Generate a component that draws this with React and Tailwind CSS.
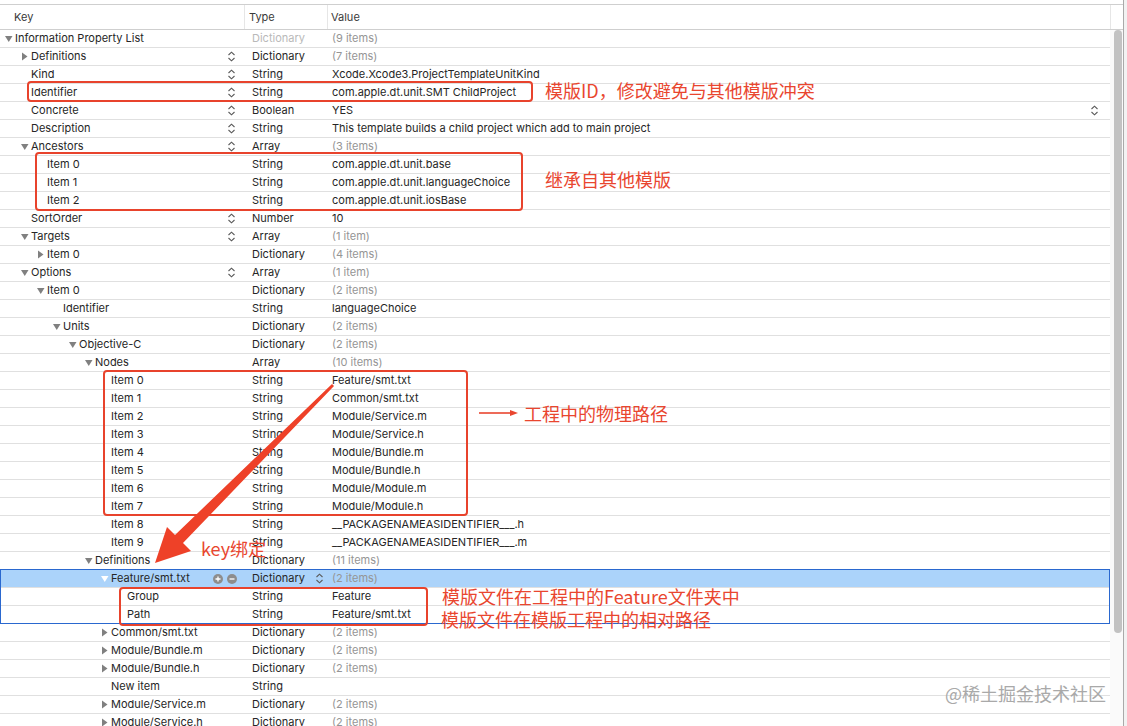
import React from "react";

const RED = "#e9462f";

const PAD = ["pl-[5px]", "pl-[21px]", "pl-[37px]", "pl-[53px]", "pl-[69px]", "pl-[85px]", "pl-[101px]", "pl-[117px]"];

const rows = [
  { l: 0, t: "open", k: "Information Property List", type: "Dictionary", tg: true, v: "(9 items)", vg: true },
  { l: 1, t: "closed", k: "Definitions", s: true, type: "Dictionary", v: "(7 items)", vg: true },
  { l: 1, k: "Kind", s: true, type: "String", v: "Xcode.Xcode3.ProjectTemplateUnitKind" },
  { l: 1, k: "Identifier", s: true, type: "String", v: "com.apple.dt.unit.SMT ChildProject" },
  { l: 1, k: "Concrete", s: true, type: "Boolean", v: "YES", vs: true },
  { l: 1, k: "Description", s: true, type: "String", v: "This template builds a child project which add to main project" },
  { l: 1, t: "open", k: "Ancestors", s: true, type: "Array", v: "(3 items)", vg: true },
  { l: 2, k: "Item 0", type: "String", v: "com.apple.dt.unit.base" },
  { l: 2, k: "Item 1", type: "String", v: "com.apple.dt.unit.languageChoice" },
  { l: 2, k: "Item 2", type: "String", v: "com.apple.dt.unit.iosBase" },
  { l: 1, k: "SortOrder", s: true, type: "Number", v: "10" },
  { l: 1, t: "open", k: "Targets", s: true, type: "Array", v: "(1 item)", vg: true },
  { l: 2, t: "closed", k: "Item 0", type: "Dictionary", v: "(4 items)", vg: true },
  { l: 1, t: "open", k: "Options", s: true, type: "Array", v: "(1 item)", vg: true },
  { l: 2, t: "open", k: "Item 0", type: "Dictionary", v: "(2 items)", vg: true },
  { l: 3, k: "Identifier", type: "String", v: "languageChoice" },
  { l: 3, t: "open", k: "Units", type: "Dictionary", v: "(2 items)", vg: true },
  { l: 4, t: "open", k: "Objective-C", type: "Dictionary", v: "(2 items)", vg: true },
  { l: 5, t: "open", k: "Nodes", type: "Array", v: "(10 items)", vg: true },
  { l: 6, k: "Item 0", type: "String", v: "Feature/smt.txt" },
  { l: 6, k: "Item 1", type: "String", v: "Common/smt.txt" },
  { l: 6, k: "Item 2", type: "String", v: "Module/Service.m" },
  { l: 6, k: "Item 3", type: "String", v: "Module/Service.h" },
  { l: 6, k: "Item 4", type: "String", v: "Module/Bundle.m" },
  { l: 6, k: "Item 5", type: "String", v: "Module/Bundle.h" },
  { l: 6, k: "Item 6", type: "String", v: "Module/Module.m" },
  { l: 6, k: "Item 7", type: "String", v: "Module/Module.h" },
  { l: 6, k: "Item 8", type: "String", v: "__PACKAGENAMEASIDENTIFIER___.h" },
  { l: 6, k: "Item 9", type: "String", v: "__PACKAGENAMEASIDENTIFIER___.m" },
  { l: 5, t: "open", k: "Definitions", type: "Dictionary", v: "(11 items)", vg: true },
  { l: 6, t: "open", k: "Feature/smt.txt", sel: true, type: "Dictionary", v: "(2 items)", vg: true },
  { l: 7, k: "Group", type: "String", v: "Feature" },
  { l: 7, k: "Path", type: "String", v: "Feature/smt.txt" },
  { l: 6, t: "closed", k: "Common/smt.txt", type: "Dictionary", v: "(2 items)", vg: true },
  { l: 6, t: "closed", k: "Module/Bundle.m", type: "Dictionary", v: "(2 items)", vg: true },
  { l: 6, t: "closed", k: "Module/Bundle.h", type: "Dictionary", v: "(2 items)", vg: true },
  { l: 6, k: "New item", type: "String", v: "" },
  { l: 6, t: "closed", k: "Module/Service.m", type: "Dictionary", v: "(2 items)", vg: true },
  { l: 6, t: "closed", k: "Module/Service.h", type: "Dictionary", v: "(2 items)", vg: true },
];

function Stepper() {
  return (
    <svg width="9" height="11" viewBox="0 0 9 11" className="shrink-0">
      <path d="M1.5 4 L4.5 1.2 L7.5 4" fill="none" stroke="#5a5a5a" strokeWidth="1.1" />
      <path d="M1.5 7 L4.5 9.8 L7.5 7" fill="none" stroke="#5a5a5a" strokeWidth="1.1" />
    </svg>
  );
}

function Tri({ open, white }) {
  const c = white ? "#ffffff" : "#808080";
  return (
    <svg width="8" height="9" viewBox="0 0 8 9">
      {open ? <polygon points="0,2 7.5,2 3.75,8" fill={c} /> : <polygon points="1,0.5 6.5,4.5 1,8.5" fill={c} />}
    </svg>
  );
}

function PlusMinus() {
  return (
    <div className="flex items-center gap-[4px]">
      <svg width="10" height="10" viewBox="0 0 10 10">
        <circle cx="5" cy="5" r="5" fill="#8d8d8d" />
        <path d="M5 2.5 V7.5 M2.5 5 H7.5" stroke="#fff" strokeWidth="1.3" />
      </svg>
      <svg width="10" height="10" viewBox="0 0 10 10">
        <circle cx="5" cy="5" r="5" fill="#8d8d8d" />
        <path d="M2.5 5 H7.5" stroke="#fff" strokeWidth="1.3" />
      </svg>
    </div>
  );
}

function Row({ r }) {
  return (
    <div
      className={
        "flex h-[18px] shrink-0 items-center border-b border-[#e0e0e0] " +
        (r.sel ? "bg-[#abd3fa]" : "bg-white")
      }
    >
      <div className="flex h-full w-[246px] shrink-0 items-center">
        <div className={"flex flex-1 items-center " + PAD[r.l]}>
          <div className="flex w-[10px] shrink-0 items-center">
            {r.t ? <Tri open={r.t === "open"} white={r.sel} /> : null}
          </div>
          <span className="whitespace-nowrap">{r.k}</span>
        </div>
        {r.sel ? (
          <div className="pr-[9px]">
            <PlusMinus />
          </div>
        ) : (
          <div className="flex w-[22px] shrink-0 items-center pl-[3px]">{r.s ? <Stepper /> : null}</div>
        )}
      </div>
      <div className="flex h-full w-[82px] shrink-0 items-center pl-[6px]">
        <span className={"flex-1 " + (r.tg ? "text-[#b9b9b9]" : "")}>{r.type}</span>
        {r.sel ? (
          <div className="mr-[4px]">
            <Stepper />
          </div>
        ) : null}
      </div>
      <div className="flex h-full flex-1 items-center pl-[4px] pr-[11px]">
        <span className={"flex-1 whitespace-nowrap " + (r.vg ? "text-[#959595]" : "")}>{r.v}</span>
        {r.vs ? <Stepper /> : null}
      </div>
    </div>
  );
}

function Box({ cls }) {
  return <div className={"pointer-events-none absolute rounded-[4px] border-2 border-[#e8432c] " + cls} />;
}

function Note({ cls, children }) {
  return (
    <div
      className={
        "absolute whitespace-nowrap text-[18px] leading-[22px] text-[#e9462f] font-['Noto_Sans_CJK_SC',sans-serif] " +
        cls
      }
    >
      {children}
    </div>
  );
}

export default function App() {
  return (
    <div className="relative h-[726px] w-[1127px] overflow-hidden bg-white font-['Inter','Liberation_Sans',sans-serif] text-[11px] text-[#262626]">
      <div className="flex h-full">
        <div className="flex w-[1123px] flex-col overflow-hidden">
          <div className="h-[4px] shrink-0 bg-white" />
          <div className="flex h-[26px] shrink-0 items-center border-y border-[#cfcfcf] text-[#3a3a3a]">
            <div className="flex h-full w-[245px] items-center border-r border-[#e6e6e6] pl-[14px]">Key</div>
            <div className="flex h-full w-[83px] items-center border-r border-[#e6e6e6] pl-[4px]">Type</div>
            <div className="flex h-full flex-1 items-center pl-[3px]">Value</div>
            <div className="h-full w-[13px] border-l border-[#e6e6e6]" />
          </div>
          <div className="flex shrink-0">
            <div className="flex w-[1110px] flex-col">
              {rows.map((r, i) => (
                <Row key={i} r={r} />
              ))}
            </div>
            <div className="flex w-[13px] justify-center bg-[#fafafa] pl-[2px]">
              <div className="h-[603px] w-[8px] rounded-full bg-[#c2c2c2]" />
            </div>
          </div>
        </div>
        <div className="w-[1px] bg-[#a9a9a9]" />
        <div className="w-[3px] bg-[#f2f2f2]" />
      </div>

      {/* selection outline */}
      <div className="pointer-events-none absolute left-0 top-[569px] h-[55px] w-[1110px] border border-[#2a68cf]" />

      {/* annotation boxes */}
      <Box cls="left-[27px] top-[81px] h-[21px] w-[506px]" />
      <Box cls="left-[35px] top-[152px] h-[59px] w-[488px]" />
      <Box cls="left-[103px] top-[370px] h-[146px] w-[365px]" />
      <Box cls="left-[119px] top-[587px] h-[39px] w-[309px]" />

      <Note cls="left-[545px] top-[79px]">模版ID，修改避免与其他模版冲突</Note>
      <Note cls="left-[545px] top-[168px]">继承自其他模版</Note>
      <Note cls="left-[524px] top-[402px]">工程中的物理路径</Note>
      <Note cls="left-[201px] top-[537px]">key绑定</Note>
      <Note cls="left-[442px] top-[585px]">模版文件在工程中的Feature文件夹中</Note>
      <Note cls="left-[441px] top-[608px]">模版文件在模版工程中的相对路径</Note>

      <svg className="pointer-events-none absolute left-0 top-0" width="1127" height="726">
        <line x1="479" y1="413" x2="511" y2="413" stroke={RED} strokeWidth="1.6" />
        <polygon points="518,413 510,410 510,416" fill={RED} />
        <polygon
          points="332,384 334,386 183,543 191,551 155,563 167,527 175,535"
          fill="#ee4128"
        />
      </svg>

      <div className="absolute left-[945px] top-[681px] whitespace-nowrap text-[18px] leading-[24px] text-[#a9a9a9] font-['Noto_Sans_CJK_SC',sans-serif]">
        @稀土掘金技术社区
      </div>
    </div>
  );
}
